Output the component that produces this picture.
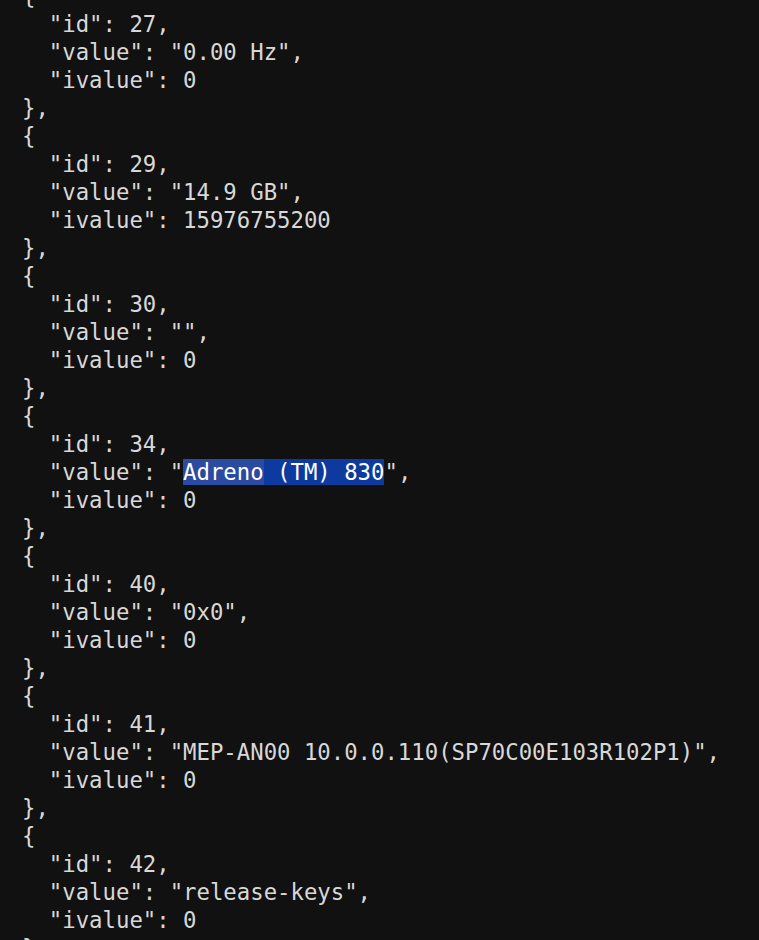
import React from 'react';

// записи, видимые в окне терминала
const entries = [
    { id: 27, value: '"0.00 Hz"', ivalue: '0' },
    { id: 29, value: '"14.9 GB"', ivalue: '15976755200' },
    { id: 30, value: '""', ivalue: '0' },
    { id: 34, value: null, ivalue: '0' },
    { id: 40, value: '"0x0"', ivalue: '0' },
    { id: 41, value: '"MEP-AN00 10.0.0.110(SP70C00E103R102P1)"', ivalue: '0' },
    { id: 42, value: '"release-keys"', ivalue: '0' },
];

function Line({ children }) {
    return <div className="h-[28px] whitespace-pre">{children}</div>;
}

export default function App() {
    return (
        <div
            className="w-[759px] h-[940px] overflow-hidden bg-[#111111] text-[#d8d8d8] text-[22.3px] leading-[28px] pl-[22px]"
            style={{ fontFamily: '"DejaVu Sans Mono", "Liberation Mono", monospace' }}
        >
            <div className="-mt-[18px]">
                {entries.map((e, i) => (
                    <React.Fragment key={e.id}>
                        <Line>{'{'}</Line>
                        <Line>{`  "id": ${e.id},`}</Line>
                        {e.value === null ? (
                            <Line>
                                {'  "value": "'}
                                <span className="bg-[#2b4aa2] text-white">Adreno</span>
                                <span className="bg-[#0c3a9f] text-white"> (TM) 830</span>
                                {'",'}
                            </Line>
                        ) : (
                            <Line>{`  "value": ${e.value},`}</Line>
                        )}
                        <Line>{`  "ivalue": ${e.ivalue}`}</Line>
                        <Line>{i === entries.length - 1 ? '}' : '},'}</Line>
                    </React.Fragment>
                ))}
            </div>
        </div>
    );
}
